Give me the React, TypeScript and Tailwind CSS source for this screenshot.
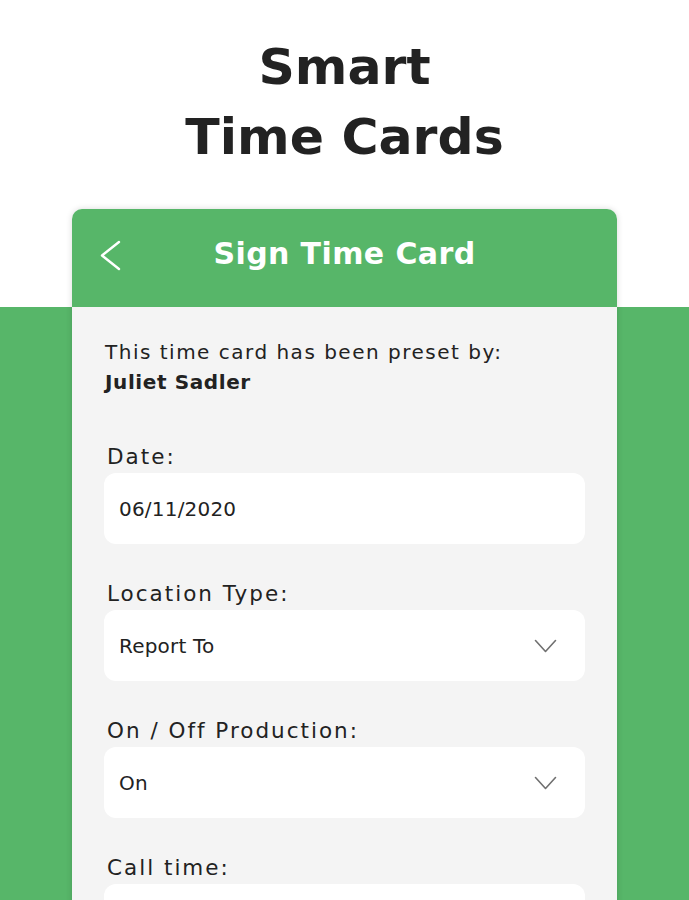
const font = { fontFamily: '"DejaVu Sans", "Noto Sans", sans-serif' };

function Chevron() {
  return (
    <svg width="23" height="14" viewBox="0 0 23 14" fill="none" className="text-[#707070]">
      <polyline points="1.5,1.5 11.5,12.5 21.5,1.5" stroke="currentColor" strokeWidth="1.6" strokeLinecap="round" strokeLinejoin="round" />
    </svg>
  );
}

function Field({ label, value, select }: { label: string; value?: string; select?: boolean }) {
  return (
    <div className="mb-[36px]">
      <div className="pl-[3px] text-[21.5px] leading-[28px] text-[#222] tracking-[2px]">{label}</div>
      <div className="mt-[2px] h-[71px] rounded-[12px] bg-white flex items-center justify-between pl-[15px] pr-[28px]">
        <span className="text-[20px] text-[#222] tracking-[0.2px]">{value}</span>
        {select && <Chevron />}
      </div>
    </div>
  );
}

export default function App() {
  return (
    <div
      className="w-full h-[900px] overflow-hidden bg-[linear-gradient(to_bottom,#ffffff_307px,#57b669_307px)]"
      style={font}
    >
      <h1 className="pt-[32px] text-center text-[50.5px] leading-[70px] font-bold text-[#222]">
        Smart
        <br />
        Time Cards
      </h1>

      <div className="mt-[37px] w-[545px] mx-auto rounded-t-[10px] overflow-hidden shadow-[0_0_6px_rgba(0,0,0,0.15)]">
        <div className="h-[98px] bg-[#57b669] relative flex items-center justify-center pb-[10px]">
          <svg
            width="22"
            height="31"
            viewBox="0 0 22 31"
            fill="none"
            className="absolute left-[28px] top-[31px] text-white"
          >
            <polyline points="19,2 2,15.5 19,29" stroke="currentColor" strokeWidth="2.4" strokeLinecap="round" strokeLinejoin="round" />
          </svg>
          <span className="text-white text-[30px] font-semibold tracking-[0.4px]">Sign Time Card</span>
        </div>
        <div className="bg-[#f4f4f4] px-[32px] pt-[30px] h-[700px]">
          <div className="pl-[1px] text-[20px] leading-[30px] text-[#222] tracking-[1.5px]">
            This time card has been preset by:
          </div>
          <div className="pl-[1px] text-[20px] leading-[31px] font-bold text-[#222] tracking-[0.6px]">
            Juliet Sadler
          </div>
          <div className="h-[45px]" />
          <Field label="Date:" value="06/11/2020" />
          <Field label="Location Type:" value="Report To" select />
          <Field label="On / Off Production:" value="On" select />
          <Field label="Call time:" />
        </div>
      </div>
    </div>
  );
}
